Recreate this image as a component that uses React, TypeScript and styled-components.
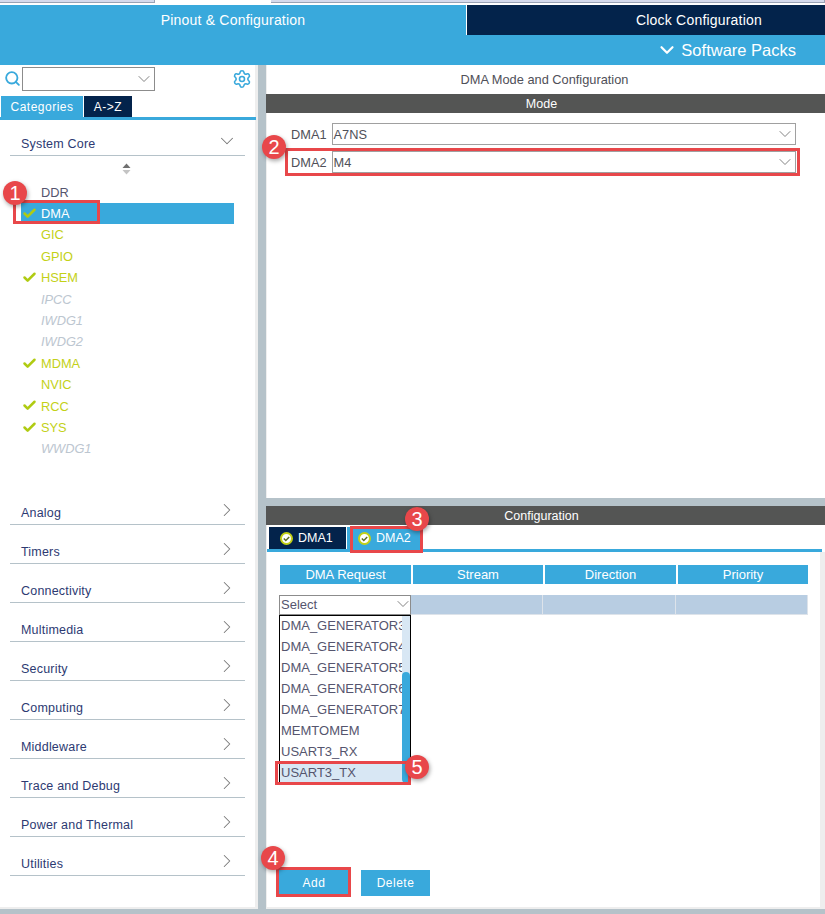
import React from 'react';
import styled, { createGlobalStyle } from 'styled-components';
import { Check, ChevronDown, ChevronRight, Search, Settings } from 'lucide-react';

const BLUE = '#39a9dc';
const NAVY = '#03234b';
const GUTTER = '#b5c2c9';
const MARK = '#e8474a';

const GlobalStyle = createGlobalStyle`
  html, body {
    margin: 0;
    padding: 0;
    background: #fff;
    font-family: 'Liberation Sans', Arial, sans-serif;
  }
  * { box-sizing: border-box; }
`;

const Page = styled.div`
  position: relative;
  width: 825px;
  height: 914px;
  overflow: hidden;
  background: ${GUTTER};
  display: flex;
  flex-direction: column;
`;

const TopStrip = styled.div`
  height: 5px;
  background: #fff;
  display: flex;
`;

const StripBox = styled.div<{ $left: number; $width: number }>`
  margin-left: ${(p) => p.$left}px;
  width: ${(p) => p.$width}px;
  height: 3px;
  background: #d5daec;
  border-bottom: 1px solid #9aa3b5;
  border-right: 1px solid #9aa3b5;
`;

const Header = styled.header`
  height: 60px;
  background: ${BLUE};
  display: flex;
  flex-direction: column;
`;

const TabRow = styled.div`
  height: 30px;
  display: flex;
`;

const MainTab = styled.div<{ $active?: boolean }>`
  width: ${(p) => (p.$active ? 466 : 358)}px;
  background: ${(p) => (p.$active ? BLUE : NAVY)};
  margin-right: ${(p) => (p.$active ? 1 : 0)}px;
  padding-left: ${(p) => (p.$active ? 0 : 106)}px;
  color: #fff;
  font-size: 14px;
  letter-spacing: 0.2px;
  display: flex;
  align-items: center;
  justify-content: center;
  box-shadow: ${(p) => (p.$active ? '1px 0 0 #fff' : 'none')};
`;

const PacksRow = styled.div`
  height: 30px;
  display: flex;
  align-items: center;
  justify-content: flex-end;
  padding-right: 29px;
  gap: 3px;
  color: #fff;
  font-size: 16.5px;
`;

const Body = styled.div`
  height: 844px;
  display: flex;
  justify-content: space-between;
`;

const Sidebar = styled.aside`
  width: 258px;
  background: #fff;
  display: flex;
  flex-direction: column;
  border-right: 3px solid #eeeeee;
  border-bottom: 2px solid #eeeeee;
`;

const SearchRow = styled.div`
  height: 31px;
  margin-right: -3px;
  display: flex;
  align-items: flex-start;
  padding: 2px 6px 0 4px;
  color: ${BLUE};
`;

const SearchIcon = styled.span`
  display: flex;
  margin-top: 3px;
`;

const Combo = styled.div`
  width: 133px;
  height: 24px;
  margin-left: 1px;
  border: 1px solid #8c8c8c;
  display: flex;
  align-items: center;
  justify-content: flex-end;
  color: #777;
`;

const GearSlot = styled.div`
  margin-left: auto;
  margin-top: 2px;
  display: flex;
`;

const SideTabs = styled.div`
  height: 24px;
  margin-right: -1px;
  padding-left: 1px;
  border-bottom: 3px solid ${BLUE};
  display: flex;
  gap: 1px;
`;

const SideTab = styled.div<{ $active?: boolean }>`
  width: ${(p) => (p.$active ? 82 : 48)}px;
  background: ${(p) => (p.$active ? BLUE : NAVY)};
  color: #fff;
  font-size: 12px;
  letter-spacing: 0.5px;
  display: flex;
  align-items: center;
  justify-content: center;
`;

const CategoryRow = styled.div<{ $tall?: boolean }>`
  height: ${(p) => (p.$tall ? 36 : 39)}px;
  margin: 0 10px;
  width: 235px;
  padding: 0 7px 0 11px;
  border-bottom: 1px solid ${GUTTER};
  display: flex;
  align-items: flex-end;
  justify-content: space-between;
  color: #2d3a72;
  font-size: 12.5px;
  letter-spacing: 0.2px;
`;

const CategoryLabel = styled.span`
  padding-bottom: 4px;
`;

const CategoryIcon = styled.span`
  display: flex;
  color: #777;
  padding-bottom: 3px;
`;

const SortGlyph = styled.div`
  height: 26px;
  padding-left: 122px;
  display: flex;
  align-items: center;
`;

const PeripheralList = styled.div`
  margin-left: 21px;
  width: 213px;
  margin-top: -0.5px;
  margin-bottom: 26.5px;
`;

const Peripheral = styled.div<{ $tone: 'plain' | 'ok' | 'off' | 'selected' }>`
  height: 21.4px;
  display: flex;
  align-items: center;
  padding-left: 20px;
  position: relative;
  font-size: 12.8px;
  font-style: ${(p) => (p.$tone === 'off' ? 'italic' : 'normal')};
  background: ${(p) => (p.$tone === 'selected' ? BLUE : 'transparent')};
  color: ${(p) =>
    p.$tone === 'selected' ? '#fff' : p.$tone === 'plain' ? '#55556e' : p.$tone === 'off' ? '#bcc6d0' : '#c3d117'};
`;

const PeripheralCheck = styled.span`
  position: absolute;
  left: 1px;
  top: 3px;
  display: flex;
  color: #b0cb12;
`;

const Content = styled.main`
  width: 559px;
  display: flex;
  flex-direction: column;
  background: ${GUTTER};
`;

const ModePanel = styled.section`
  height: 433px;
  background: #fff;
  border-left: 1px solid #eee;
`;

const PanelTitle = styled.div`
  height: 29px;
  padding-right: 3px;
  display: flex;
  align-items: center;
  justify-content: center;
  color: #4f5058;
  font-size: 12.8px;
`;

const DarkBar = styled.div`
  height: 19px;
  margin-left: -1px;
  padding-right: 8px;
  background: #545554;
  color: #fff;
  font-size: 12.5px;
  display: flex;
  align-items: center;
  justify-content: center;
`;

const ModeForm = styled.div`
  padding: 10px 0 0 24px;
  display: flex;
  flex-direction: column;
  gap: 6px;
`;

const ModeRow = styled.div`
  display: flex;
  align-items: center;
  gap: 5px;
  color: #4f5058;
  font-size: 12.8px;
`;

const ModeSelect = styled.div`
  width: 464px;
  height: 22px;
  border: 1px solid #a0a0a0;
  padding-left: 1px;
  display: flex;
  align-items: center;
  justify-content: space-between;
`;

const SelectArrow = styled.span<{ $tight?: boolean }>`
  display: flex;
  color: #777;
  margin-right: ${(p) => (p.$tight ? -3 : 0)}px;
`;

const ConfigPanel = styled.section`
  margin-top: 8px;
  height: 403px;
  background: #fff;
  border-left: 1px solid #eee;
  border-bottom: 2px solid #eee;
  display: flex;
  flex-direction: column;
`;

const ConfigTabs = styled.div`
  height: 27px;
  margin-right: 3px;
  padding: 2px 0 0 2px;
  border-bottom: 3px solid ${BLUE};
  display: flex;
  gap: 1px;
`;

const ConfigTab = styled.div<{ $active?: boolean }>`
  width: ${(p) => (p.$active ? 75 : 77)}px;
  background: ${(p) => (p.$active ? BLUE : NAVY)};
  color: #fff;
  font-size: 12.5px;
  display: flex;
  align-items: center;
  padding-left: 11px;
  gap: 5px;
`;

const ConfigBody = styled.div`
  flex: 1;
  margin-right: 5px;
  box-shadow: 5px 0 0 #eeeeee;
  padding: 13px 0 11px 12px;
  display: flex;
  flex-direction: column;
`;

const HeadRow = styled.div`
  display: flex;
  gap: 2px;
  height: 19px;
  padding-left: 1px;
`;

const HeadCell = styled.div<{ $wide?: boolean }>`
  width: ${(p) => (p.$wide ? 131 : 130)}px;
  background: ${BLUE};
  color: #fff;
  font-size: 13px;
  display: flex;
  align-items: center;
  justify-content: center;
`;

const ValueRow = styled.div`
  display: flex;
  margin-top: 11px;
  height: 20px;
  width: 529px;
  border-bottom: 1px solid #dde3ea;
`;

const RequestSelect = styled.div`
  width: 132px;
  height: 20px;
  flex: none;
  border: 1px solid #8c8c8c;
  background: #fff;
  padding: 0 0 2px 1px;
  color: #55556e;
  font-size: 13px;
  display: flex;
  align-items: center;
  justify-content: space-between;
`;

const ValueCell = styled.div<{ $wide?: boolean }>`
  width: ${(p) => (p.$wide ? 133 : 132)}px;
  background: #b8cde2;
  border-right: 1px solid #dde3ea;
`;

const Dropdown = styled.div`
  width: 132px;
  height: 169px;
  border-top: 1px solid #000;
  border-left: 1px solid #000;
  border-right: 1px solid #000;
  display: flex;
`;

const DropdownItems = styled.div`
  flex: 1;
  min-width: 0;
  overflow: hidden;
`;

const DropdownItem = styled.div<{ $selected?: boolean }>`
  height: 21px;
  padding-left: 1px;
  white-space: nowrap;
  overflow: hidden;
  color: #55556e;
  font-size: 13px;
  line-height: 19px;
  background: ${(p) => (p.$selected ? '#d8e7f4' : 'transparent')};
`;

const ScrollTrack = styled.div`
  width: 8px;
  background: #d8e7f4;
  display: flex;
  flex-direction: column;
  justify-content: flex-end;
`;

const ScrollThumb = styled.div`
  height: 111px;
  margin-bottom: 1px;
  border-radius: 4px;
  background: ${BLUE};
`;

const ActionRow = styled.div`
  margin-top: auto;
  display: flex;
  gap: 12px;
`;

const ActionButton = styled.button<{ $narrow?: boolean }>`
  width: ${(p) => (p.$narrow ? 69 : 70)}px;
  height: 26px;
  border: 0;
  padding: 0;
  background: ${BLUE};
  color: #fff;
  font-family: inherit;
  font-size: 12px;
  letter-spacing: 0.5px;
`;

const Highlight = styled.div<{ $x: number; $y: number; $w: number; $h: number }>`
  position: absolute;
  left: ${(p) => p.$x}px;
  top: ${(p) => p.$y}px;
  width: ${(p) => p.$w}px;
  height: ${(p) => p.$h}px;
  border: 3px solid ${MARK};
`;

const Badge = styled.div<{ $x: number; $y: number }>`
  position: absolute;
  left: ${(p) => p.$x - 12}px;
  top: ${(p) => p.$y - 12}px;
  width: 24px;
  height: 24px;
  border-radius: 50%;
  background: ${MARK};
  color: #fff;
  font-size: 20px;
  display: flex;
  align-items: center;
  justify-content: center;
  box-shadow: 1px 2px 4px rgba(0, 0, 0, 0.35);
`;

const TabCheck = () => (
  <svg width="13" height="13" viewBox="0 0 13 13">
    <circle cx="6.5" cy="6.5" r="5.5" fill="#fff" stroke="#c3d117" strokeWidth="2" />
    <path d="M3.8 6.6l2 2 3.4-3.6" fill="none" stroke="#5a6a20" strokeWidth="1.4" />
  </svg>
);

const peripherals: { name: string; tone: 'plain' | 'ok' | 'off' | 'selected'; checked?: boolean }[] = [
  { name: 'DDR', tone: 'plain' },
  { name: 'DMA', tone: 'selected', checked: true },
  { name: 'GIC', tone: 'ok' },
  { name: 'GPIO', tone: 'ok' },
  { name: 'HSEM', tone: 'ok', checked: true },
  { name: 'IPCC', tone: 'off' },
  { name: 'IWDG1', tone: 'off' },
  { name: 'IWDG2', tone: 'off' },
  { name: 'MDMA', tone: 'ok', checked: true },
  { name: 'NVIC', tone: 'ok' },
  { name: 'RCC', tone: 'ok', checked: true },
  { name: 'SYS', tone: 'ok', checked: true },
  { name: 'WWDG1', tone: 'off' },
];

const categories = [
  'Analog',
  'Timers',
  'Connectivity',
  'Multimedia',
  'Security',
  'Computing',
  'Middleware',
  'Trace and Debug',
  'Power and Thermal',
  'Utilities',
];

const requests = [
  'DMA_GENERATOR3',
  'DMA_GENERATOR4',
  'DMA_GENERATOR5',
  'DMA_GENERATOR6',
  'DMA_GENERATOR7',
  'MEMTOMEM',
  'USART3_RX',
  'USART3_TX',
];

const marks = [
  { x: 13, y: 200, w: 87, h: 24, n: 1, bx: 15, by: 193 },
  { x: 285, y: 148, w: 515, h: 28, n: 2, bx: 274, by: 147 },
  { x: 350, y: 526, w: 73, h: 27, n: 3, bx: 417, by: 519 },
  { x: 276, y: 867, w: 75, h: 30, n: 4, bx: 273, by: 858 },
  { x: 275, y: 761, w: 136, h: 24, n: 5, bx: 417, by: 767 },
];

export default function App() {
  return (
    <>
      <GlobalStyle />
      <Page>
        <TopStrip>
          <StripBox $left={0} $width={155} />
          <StripBox $left={116} $width={554} />
        </TopStrip>
        <Header>
          <TabRow>
            <MainTab $active>Pinout &amp; Configuration</MainTab>
            <MainTab>Clock Configuration</MainTab>
          </TabRow>
          <PacksRow>
            <ChevronDown size={22} strokeWidth={2.4} />
            Software Packs
          </PacksRow>
        </Header>
        <Body>
          <Sidebar>
            <SearchRow>
              <SearchIcon>
                <Search size={17} strokeWidth={2.6} />
              </SearchIcon>
              <Combo>
                <ChevronDown size={20} strokeWidth={1.1} />
              </Combo>
              <GearSlot>
                <Settings size={20} strokeWidth={1.9} />
              </GearSlot>
            </SearchRow>
            <SideTabs>
              <SideTab $active>Categories</SideTab>
              <SideTab>A-&gt;Z</SideTab>
            </SideTabs>
            <CategoryRow $tall>
              <CategoryLabel>System Core</CategoryLabel>
              <CategoryIcon>
                <ChevronDown size={22} strokeWidth={1.1} />
              </CategoryIcon>
            </CategoryRow>
            <SortGlyph>
              <svg width="9" height="12" viewBox="0 0 9 12">
                <path d="M4.5 0.5L8.5 5H0.5z" fill="#707070" />
                <path d="M4.5 11.5L8.5 7H0.5z" fill="#c4c4c4" />
              </svg>
            </SortGlyph>
            <PeripheralList>
              {peripherals.map((item) => (
                <Peripheral key={item.name} $tone={item.tone}>
                  {item.checked && (
                    <PeripheralCheck>
                      <Check size={15} strokeWidth={4} />
                    </PeripheralCheck>
                  )}
                  {item.name}
                </Peripheral>
              ))}
            </PeripheralList>
            {categories.map((name) => (
              <CategoryRow key={name}>
                <CategoryLabel>{name}</CategoryLabel>
                <CategoryIcon>
                  <ChevronRight size={22} strokeWidth={1.1} />
                </CategoryIcon>
              </CategoryRow>
            ))}
          </Sidebar>
          <Content>
            <ModePanel>
              <PanelTitle>DMA Mode and Configuration</PanelTitle>
              <DarkBar>Mode</DarkBar>
              <ModeForm>
                <ModeRow>
                  DMA1
                  <ModeSelect>
                    A7NS
                    <SelectArrow>
                      <ChevronDown size={20} strokeWidth={1.1} />
                    </SelectArrow>
                  </ModeSelect>
                </ModeRow>
                <ModeRow>
                  DMA2
                  <ModeSelect>
                    M4
                    <SelectArrow>
                      <ChevronDown size={20} strokeWidth={1.1} />
                    </SelectArrow>
                  </ModeSelect>
                </ModeRow>
              </ModeForm>
            </ModePanel>
            <ConfigPanel>
              <DarkBar>Configuration</DarkBar>
              <ConfigTabs>
                <ConfigTab>
                  <TabCheck />
                  DMA1
                </ConfigTab>
                <ConfigTab $active>
                  <TabCheck />
                  DMA2
                </ConfigTab>
              </ConfigTabs>
              <ConfigBody>
                <HeadRow>
                  <HeadCell $wide>DMA Request</HeadCell>
                  <HeadCell>Stream</HeadCell>
                  <HeadCell $wide>Direction</HeadCell>
                  <HeadCell>Priority</HeadCell>
                </HeadRow>
                <ValueRow>
                  <RequestSelect>
                    Select
                    <SelectArrow $tight>
                      <ChevronDown size={20} strokeWidth={1.1} />
                    </SelectArrow>
                  </RequestSelect>
                  <ValueCell />
                  <ValueCell $wide />
                  <ValueCell />
                </ValueRow>
                <Dropdown>
                  <DropdownItems>
                    {requests.map((name) => (
                      <DropdownItem key={name} $selected={name === 'USART3_TX'}>
                        {name}
                      </DropdownItem>
                    ))}
                  </DropdownItems>
                  <ScrollTrack>
                    <ScrollThumb />
                  </ScrollTrack>
                </Dropdown>
                <ActionRow>
                  <ActionButton>Add</ActionButton>
                  <ActionButton $narrow>Delete</ActionButton>
                </ActionRow>
              </ConfigBody>
            </ConfigPanel>
          </Content>
        </Body>
        {marks.map((m) => (
          <React.Fragment key={m.n}>
            <Highlight $x={m.x} $y={m.y} $w={m.w} $h={m.h} />
            <Badge $x={m.bx} $y={m.by}>
              {m.n}
            </Badge>
          </React.Fragment>
        ))}
      </Page>
    </>
  );
}
